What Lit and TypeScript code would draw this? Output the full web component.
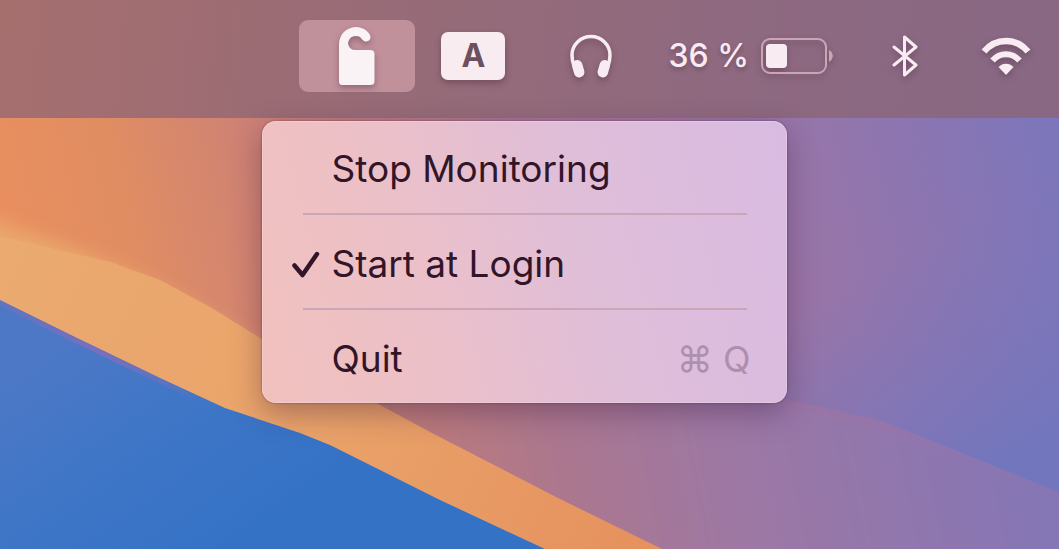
import { LitElement, html, css, svg } from "lit";
import { customElement, state } from "lit/decorators.js";

@customElement("desktop-wallpaper")
class DesktopWallpaper extends LitElement {
  static styles = css`
    :host { display: block; }
    .art { display: block; width: 100%; height: 100%; }
  `;
  render() {
    return html`
      <svg class="art" viewBox="0 0 1059 549" preserveAspectRatio="none" aria-hidden="true">
        <defs>
          <linearGradient id="sky" gradientUnits="userSpaceOnUse" x1="0" y1="220" x2="1020" y2="-20">
            <stop offset="0" stop-color="#e98f5f" />
            <stop offset=".12" stop-color="#e08d63" />
            <stop offset=".27" stop-color="#cb8077" />
            <stop offset=".5" stop-color="#a97492" />
            <stop offset=".78" stop-color="#9575ab" />
            <stop offset="1" stop-color="#7c76bb" />
          </linearGradient>
          <linearGradient id="fold" gradientUnits="userSpaceOnUse" x1="850" y1="280" x2="960" y2="490">
            <stop offset="0" stop-color="#7c76bb" stop-opacity="0" />
            <stop offset="1" stop-color="#7276bd" />
          </linearGradient>
          <linearGradient id="plain" gradientUnits="userSpaceOnUse" x1="420" y1="520" x2="1020" y2="400">
            <stop offset="0" stop-color="#bd7b78" />
            <stop offset=".25" stop-color="#ab778f" />
            <stop offset=".5" stop-color="#9e78a3" />
            <stop offset="1" stop-color="#8576b5" />
          </linearGradient>
          <linearGradient id="sand" gradientUnits="userSpaceOnUse" x1="0" y1="240" x2="620" y2="549">
            <stop offset="0" stop-color="#eaaa70" />
            <stop offset=".5" stop-color="#eaa46a" />
            <stop offset="1" stop-color="#e6925f" />
          </linearGradient>
          <linearGradient id="sea" gradientUnits="userSpaceOnUse" x1="90" y1="330" x2="240" y2="549">
            <stop offset="0" stop-color="#4c78c6" />
            <stop offset=".45" stop-color="#3f76c6" />
            <stop offset="1" stop-color="#3472c6" />
          </linearGradient>
          <linearGradient id="rim" gradientUnits="userSpaceOnUse" x1="0" y1="300" x2="210" y2="400">
            <stop offset="0" stop-color="#7a6fbc" stop-opacity=".4" />
            <stop offset=".5" stop-color="#7a6fbc" />
            <stop offset="1" stop-color="#7a6fbc" stop-opacity="0" />
          </linearGradient>
          <filter id="soft" x="-10%" y="-20%" width="120%" height="140%"><feGaussianBlur stdDeviation="8" /></filter>
          <filter id="faint"><feGaussianBlur stdDeviation="3" /></filter>
        </defs>
        <rect width="1059" height="549" fill="url(#sky)" />
        <path d="M700 180H1100V520L1059 492L960 452L880 420L780 398L700 380Z" fill="url(#fold)" />
        <path d="M300 370L700 385L780 404L880 430L960 458L1059 500L1140 540V600H300Z" fill="url(#plain)" filter="url(#faint)" />
        <path d="M-40 206L0 222L90 254L160 286L260 344V460H-40Z" fill="#eaa66c" filter="url(#soft)" />
        <path d="M0 236L50 248L110 262L160 280L210 307L260 338L380 405L430 432L560 499L662 549H0Z" fill="url(#sand)" />
        <path d="M0 300L75 337L160 378L225 408L300 433L330 445L440 500L545 549H0Z" fill="url(#sea)" />
        <path d="M0 303L75 340L160 381L225 411" fill="none" stroke="url(#rim)" stroke-width="5" />
      </svg>
    `;
  }
}

const hanger = svg`
  <path d="M27 10C21 1 4.500 3 4.500 18V26" fill="none" stroke="#faf3f5" stroke-width="9" stroke-linecap="round" />
  <path fill="#faf3f5" d="M0 17H9A8 8 0 0 0 17 23H31C34 23 35.500 24.500 35.500 27V54C35.500 57 34 58 31 58H4C1 58 0 57 0 54Z" />`;

@customElement("status-bar")
class StatusBar extends LitElement {
  static styles = css`
    :host { display: block; }
    .bar {
      display: flex;
      justify-content: flex-end;
      align-items: center;
      height: 118px;
      padding: 0 28px 6px 0;
      box-sizing: border-box;
      background: linear-gradient(96deg, #a66f6e 0%, #9c6c74 24%, #946b79 45%, #8e6980 70%, #886884 100%);
      color: #f9ebf2;
    }
    .item {
      display: flex;
      align-items: center;
      padding: 0;
      border: 0;
      background: none;
      color: inherit;
      font: 500 32px/36px Inter, sans-serif;
    }
    .icon {
      display: block;
      overflow: visible;
      filter: drop-shadow(0 3px 3px rgb(60 25 50 / 35%));
    }
    .anchor { position: relative; margin-right: 26px; }
    .active {
      justify-content: center;
      width: 116px;
      height: 72px;
      border-radius: 9px;
      background: #c0909b;
    }
    .keyboard {
      justify-content: center;
      width: 64px;
      height: 48px;
      margin-right: 65px;
      border-radius: 7px;
      background: #f8ecf1;
      color: #6d505f;
      font-weight: 700;
      box-shadow: 0 3px 6px rgb(60 25 50 / 35%);
    }
    .audio { margin-right: 56px; }
    .power { gap: 12px; margin-right: 59px; text-shadow: 0 3px 4px rgb(60 25 50 / 30%); }
    .bluetooth { margin-right: 63px; }
    .popup {
      position: absolute;
      z-index: 1;
      top: calc(100% + 29px);
      left: -37px;
    }
  `;

  render() {
    return html`
      <nav class="bar" aria-label="Menu bar">
        <div class="anchor">
          <button class="item active" aria-label="Monitoring" aria-haspopup="menu" aria-expanded="true">
            <svg class="icon" width="36" height="58" viewBox="0 0 36 58">${hanger}</svg>
          </button>
          <div class="popup"><slot></slot></div>
        </div>
        <button class="item keyboard" aria-label="Input source A">A</button>
        <button class="item audio" aria-label="Headphones">
          <svg class="icon" width="42" height="42" viewBox="0 0 42 42" fill="none" stroke="currentColor">
            <path d="M4 31C2.500 27 2 24 2 20A19 18.500 0 0 1 40 20C40 24 39.500 27 38 31" stroke-width="3.500" />
            <rect x="3" y="25" width="10.500" height="17.500" rx="5" transform="rotate(-16 8 34)" fill="currentColor" stroke="none" />
            <rect x="28.500" y="25" width="10.500" height="17.500" rx="5" transform="rotate(16 34 34)" fill="currentColor" stroke="none" />
          </svg>
        </button>
        <button class="item power" aria-label="Battery 36 %">
          <span>36 %</span>
          <svg class="icon" width="72" height="36" viewBox="0 0 72 36">
            <rect x="1" y="1" width="64" height="34" rx="8" fill="none" stroke="#c9a5b5" stroke-width="2" />
            <rect x="5" y="6" width="21" height="24" rx="4" fill="currentColor" />
            <path d="M68 12C73 15 73 21 68 24Z" fill="#c9a5b5" />
          </svg>
        </button>
        <button class="item bluetooth" aria-label="Bluetooth">
          <svg class="icon" width="26" height="42" viewBox="0 0 26 42" fill="none" stroke="currentColor" stroke-width="3" stroke-linejoin="round" stroke-linecap="round">
            <path d="M2 12L24 30L12.500 40V2L24 12L2 30" />
          </svg>
        </button>
        <button class="item" aria-label="Wi-Fi">
          <svg class="icon" width="50" height="38" viewBox="0 0 50 38" fill="none" stroke="currentColor">
            <path d="M3 14.500C15 .500 35 .500 47 14.500" stroke-width="6.500" />
            <path d="M11.500 23.500C19 15 31 15 38.500 23.500" stroke-width="6" />
            <path d="M25 38L17.500 30C21.500 25.500 28.500 25.500 32.500 30Z" fill="currentColor" stroke="none" />
          </svg>
        </button>
      </nav>
    `;
  }
}

@customElement("status-menu")
class StatusMenu extends LitElement {
  static styles = css`
    :host { display: block; }
    .menu {
      width: 525px;
      box-sizing: border-box;
      padding: 14px 0 10px;
      border-radius: 14px;
      background: linear-gradient(76deg, #f1c1bd 0%, #ecc0c8 30%, #dfbed9 62%, #d9bbe2 100%);
      box-shadow:
        inset 0 0 0 1px rgb(255 235 250 / 25%),
        0 0 2px rgb(60 25 60 / 60%),
        0 10px 30px rgb(60 25 60 / 38%);
    }
    .row {
      display: grid;
      grid-template-columns: 39px 1fr auto;
      align-items: center;
      width: 100%;
      height: 68px;
      padding: 0 37px 0 30px;
      border: 0;
      background: none;
      color: #321527;
      font: 400 37px/44px Inter, sans-serif;
      text-align: left;
    }
    .tick { display: block; }
    .label { grid-column: 2; }
    .shortcut { color: #ae8fae; font: inherit; font-size: 36px; }
    .rule {
      height: 2px;
      margin: 10px 40px 15px 41px;
      border: 0;
      background: #cba6b7;
    }
  `;

  @state() private startAtLogin = true;

  render() {
    return html`
      <div class="menu" role="menu">
        <button class="row" role="menuitem"><span class="label">Stop Monitoring</span></button>
        <hr class="rule" />
        <button
          class="row"
          role="menuitemcheckbox"
          aria-checked=${this.startAtLogin ? "true" : "false"}
          @click=${() => (this.startAtLogin = !this.startAtLogin)}
        >
          ${this.startAtLogin
            ? html`<svg class="tick" width="28" height="28" viewBox="0 0 28 28" fill="none" stroke="currentColor" stroke-width="4.500" stroke-linecap="round" stroke-linejoin="round">
                <path d="M2.500 15.500L10.500 25L25 4" />
              </svg>`
            : null}
          <span class="label">Start at Login</span>
        </button>
        <hr class="rule" />
        <button class="row" role="menuitem">
          <span class="label">Quit</span>
          <kbd class="shortcut">⌘ Q</kbd>
        </button>
      </div>
    `;
  }
}

@customElement("app-root")
class AppRoot extends LitElement {
  static styles = css`
    :host {
      display: block;
      position: relative;
      min-height: 100vh;
      overflow: hidden;
    }
    .backdrop { position: absolute; inset: 0; }
    .top { position: relative; }
  `;
  render() {
    return html`
      <desktop-wallpaper class="backdrop"></desktop-wallpaper>
      <status-bar class="top"><status-menu></status-menu></status-bar>
    `;
  }
}
